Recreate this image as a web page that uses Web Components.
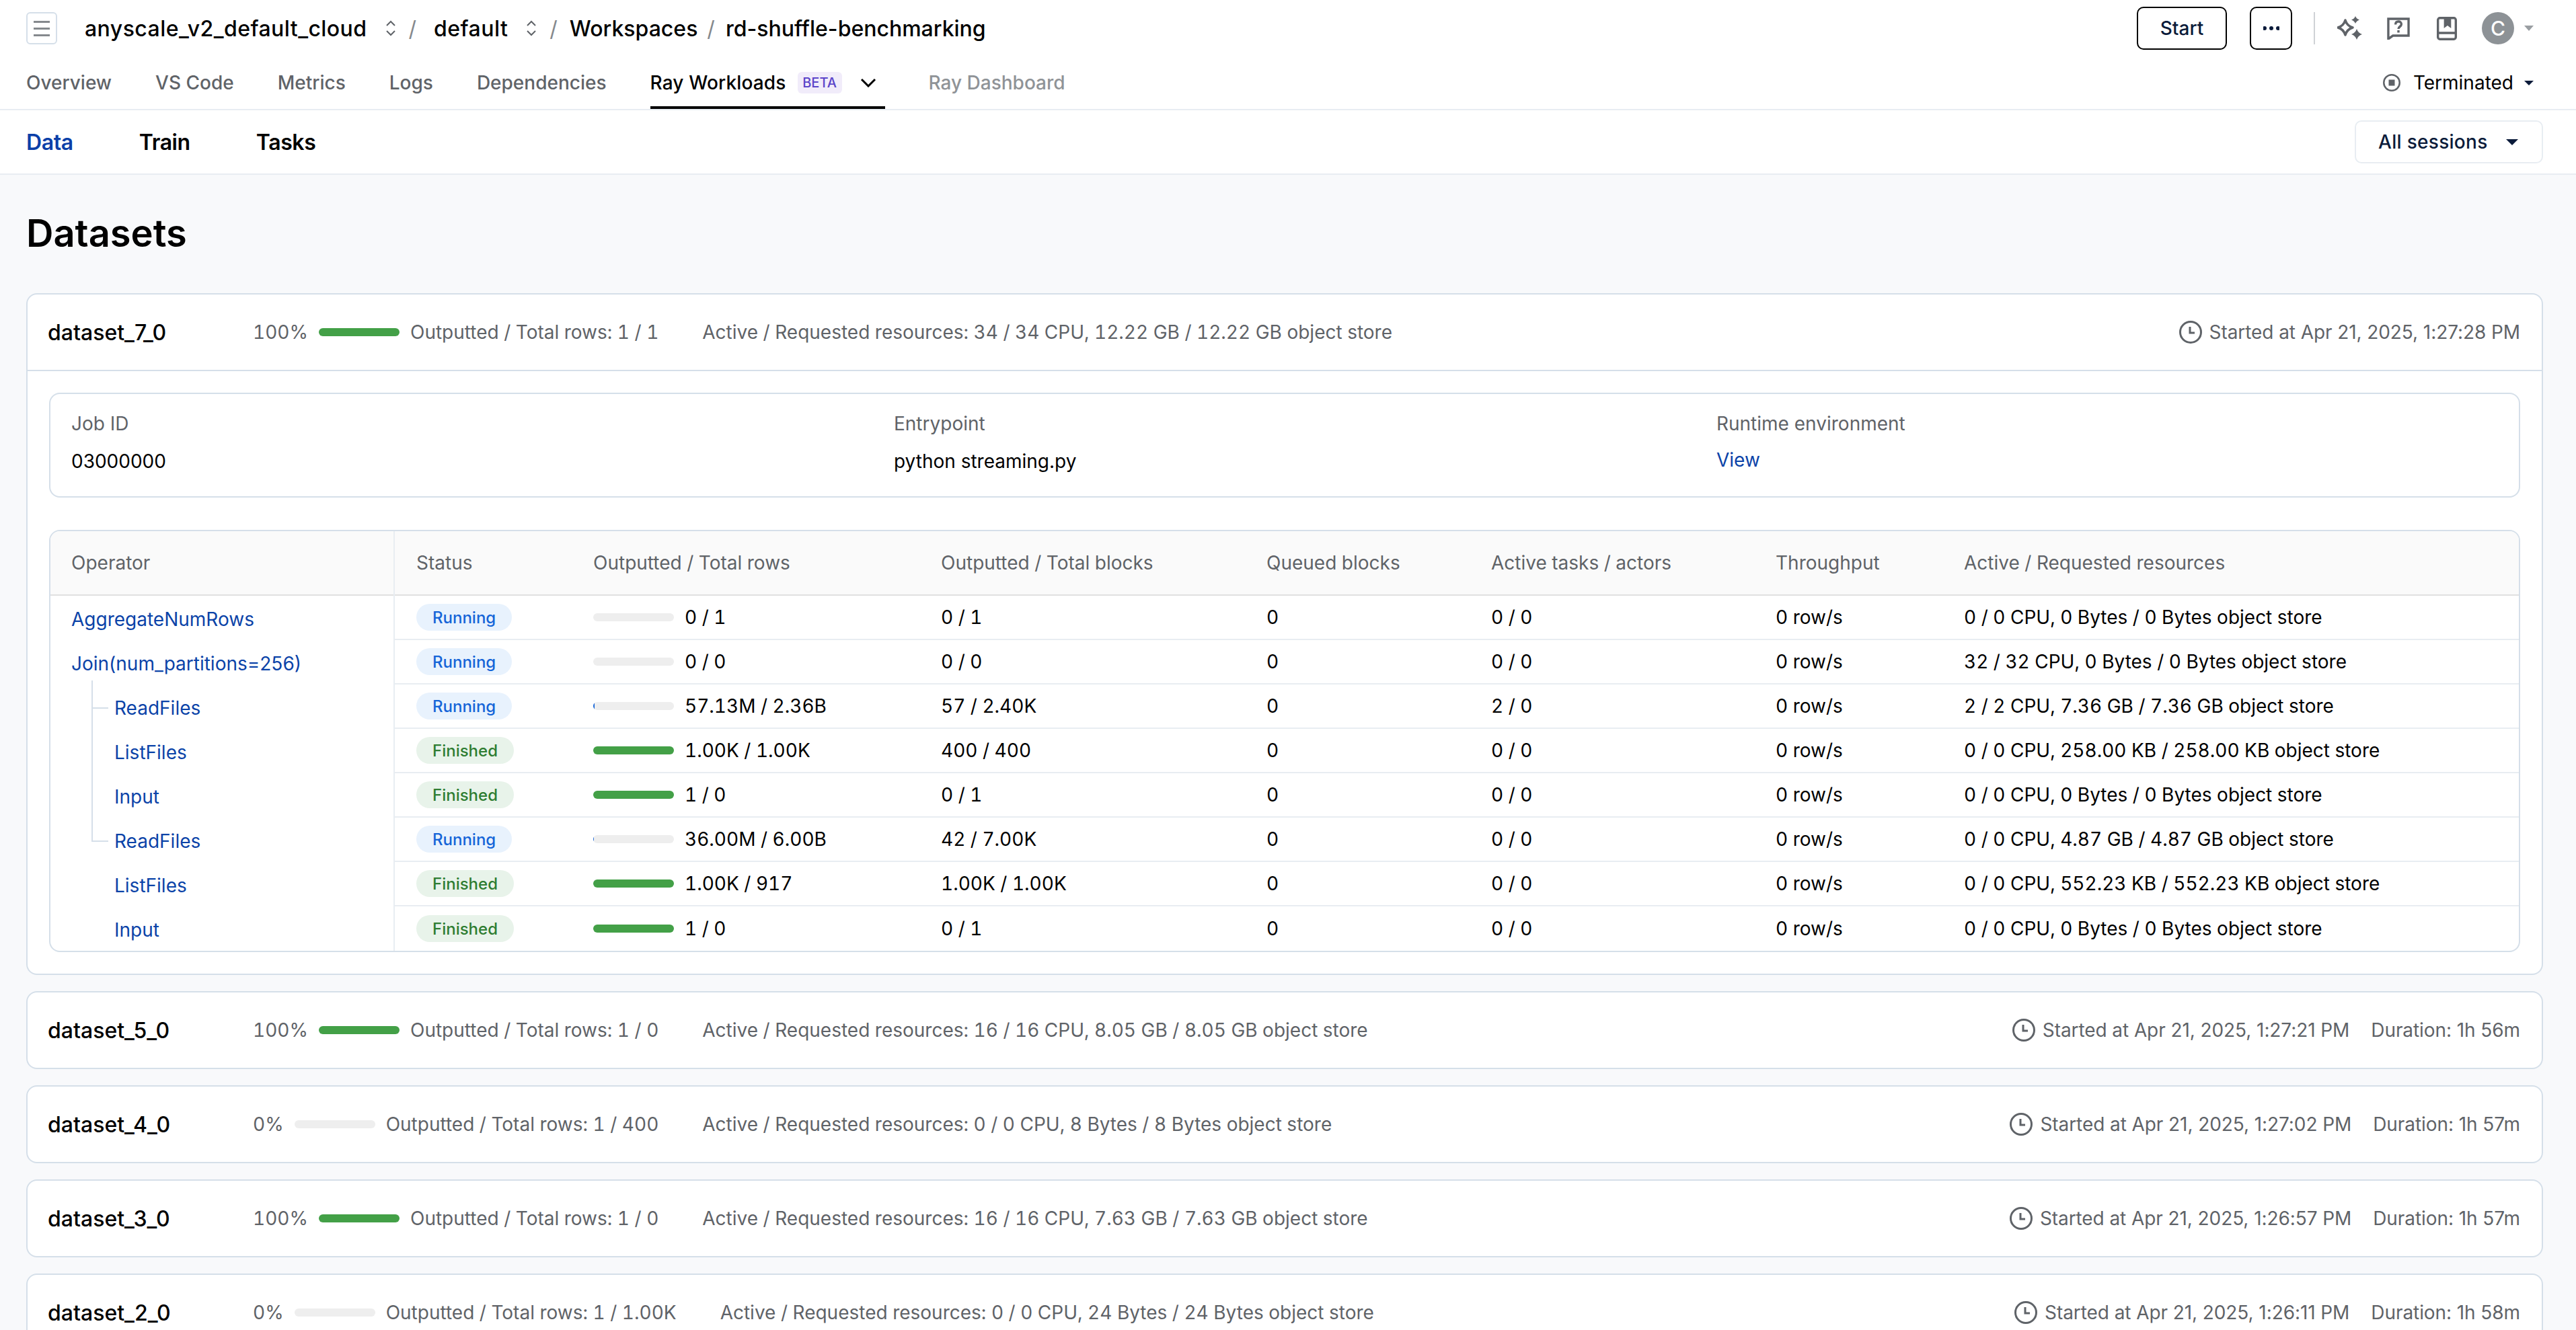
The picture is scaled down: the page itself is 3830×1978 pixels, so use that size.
<!doctype html>
<html>
<head>
<meta charset="utf-8">
<title>Datasets</title>
<style>
  html, body { margin: 0; height: 100%; overflow: hidden; background: #f8f9fb; }
  body { font-family: Inter, "Liberation Sans", sans-serif; font-size: 28px; color: #000; }
</style>
</head>
<body>
<app-header></app-header>
<sub-nav></sub-nav>
<datasets-page>
  <dataset-card name="dataset_7_0" pct="100" rows="1 / 1" res="34 / 34 CPU, 12.22 GB / 12.22 GB object store" started="Apr 21, 2025, 1:27:28 PM">
    <job-info></job-info>
    <operator-table></operator-table>
  </dataset-card>
  <dataset-card name="dataset_5_0" pct="100" rows="1 / 0" res="16 / 16 CPU, 8.05 GB / 8.05 GB object store" started="Apr 21, 2025, 1:27:21 PM" duration="1h 56m"></dataset-card>
  <dataset-card name="dataset_4_0" pct="0" rows="1 / 400" res="0 / 0 CPU, 8 Bytes / 8 Bytes object store" started="Apr 21, 2025, 1:27:02 PM" duration="1h 57m"></dataset-card>
  <dataset-card name="dataset_3_0" pct="100" rows="1 / 0" res="16 / 16 CPU, 7.63 GB / 7.63 GB object store" started="Apr 21, 2025, 1:26:57 PM" duration="1h 57m"></dataset-card>
  <dataset-card name="dataset_2_0" pct="0" rows="1 / 1.00K" res="0 / 0 CPU, 24 Bytes / 24 Bytes object store" started="Apr 21, 2025, 1:26:11 PM" duration="1h 58m"></dataset-card>
</datasets-page>

<script>
// Shared icons
const upDown = `<svg width="18" height="24" viewBox="0 0 18 24" fill="none" stroke="#5f6368" stroke-width="2"><path d="M3 8l6-6 6 6M3 16l6 6 6-6"/></svg>`

// Top bar and tabs
const headerTemplate = document.createElement("template")
headerTemplate.innerHTML = `
  <style>
    :host { display: block; background: #fff; border-bottom: 2px solid #e8edf2; height: 162px; position: relative; }
    .top { display: flex; align-items: center; height: 84px; padding: 0 63px 0 39px; }
    .menu { width: 46px; height: 48px; box-sizing: border-box; border: 2px solid #d5dfe9; border-radius: 6px; display: flex; flex-direction: column; justify-content: center; gap: 7px; align-items: center; margin-right: 41px; }
    .menu i { display: block; width: 24px; height: 3px; background: #85898d; }
    .crumb { font-size: 32px; font-weight: 500; display: flex; align-items: center; }
    .crumb svg { margin-left: 26px; }
    .sel { letter-spacing: .45px; }
    .sep { color: #85898d; font-weight: 400; }
    .actions { margin-left: auto; display: flex; align-items: center; }
    .btn { box-sizing: border-box; height: 64px; border: 2.5px solid #000; border-radius: 10px; background: #fff; display: flex; align-items: center; justify-content: center; color: #0b1b3a; font-weight: 500; }
    .start { width: 134px; }
    .more { width: 63px; margin-left: 34px; }
    .div { width: 2px; height: 48px; background: #cfd2d6; margin: 0 33px 0 32px; }
    .actions svg.ic { display: block; }
    .avatar { width: 48px; height: 48px; border-radius: 50%; background: #8d9296; color: #fff; display: flex; align-items: center; justify-content: center; font-size: 30px; font-weight: 500; margin-left: 37px; }
    .tabs { display: flex; align-items: center; height: 78px; padding: 0 63px 0 39px; position: relative; }
    .tab { color: #5f6368; font-size: 28px; font-weight: 500; margin-right: 65px; line-height: 78px; height: 78px; }
    .tab.active { color: #000; display: flex; align-items: center; position: relative; }
    .tab.active b { font-weight: 500; letter-spacing: .15px; }
    .tab.active::after { content: ""; position: absolute; left: 0; right: 0; bottom: 0; height: 4px; background: #000; }
    .tab.off { color: #8f9397; }
    .beta { font-size: 20px; font-weight: 500; line-height: 32px; height: 32px; width: 66px; text-align: center; background: #f1ecfa; color: #5b45c9; border-radius: 6px; margin: 0 27px 0 17px; }
    .status { margin-left: auto; display: flex; align-items: center; font-size: 28px; }
    .status span { margin: 0 16px 0 19px; }
  </style>
  <div class="top">
    <div class="menu"><i></i><i></i><i></i></div>
    <div class="crumb">
      <span class="sel">anyscale_v2_default_cloud</span>${upDown}<span class="sep" style="margin:0 26px 0 18px">/</span>
      <span class="sel">default</span>${upDown}<span class="sep" style="margin:0 18px 0 18px">/</span>
      <span>Workspaces</span><span class="sep" style="margin:0 16px 0 14px">/</span>
      <span>rd-shuffle-benchmarking</span>
    </div>
    <div class="actions">
      <div class="btn start">Start</div>
      <div class="btn more"><svg width="24" height="8" viewBox="0 0 24 8" fill="#0b1b3a"><circle cx="2" cy="4" r="3"/><circle cx="12" cy="4" r="3"/><circle cx="22" cy="4" r="3"/></svg></div>
      <div class="div"></div>
      <svg class="ic" width="38" height="36" viewBox="0 0 38 36" fill="#5f6368" style="margin-right:36px"><path d="M12 6Q14.500 14.500 23 17Q14.500 19.500 12 28Q9.500 19.500 1 17Q9.500 14.500 12 6Z" fill="none" stroke="#5f6368" stroke-width="3.500" stroke-linejoin="round"/><path d="M27 0Q28.500 4 33 5.500Q28.500 7 27 11Q25.500 7 21 5.500Q25.500 4 27 0Z"/><path d="M29 19Q31 25 37 27Q31 29 29 35Q27 29 21 27Q27 25 29 19Z"/></svg>
      <svg class="ic" width="34" height="34" viewBox="0 0 35 34" preserveAspectRatio="none" fill="none" stroke="#5f6368" stroke-width="3.500" style="margin-right:40px"><path d="M2 3h31v25H9l-7 5z"/><path d="M13 11.500c0-3 2-4.500 4.500-4.500s4.500 1.500 4.500 4c0 3.500-4.500 3.500-4.500 7"/><path d="M17.500 20v3.500"/></svg>
      <svg class="ic" width="30" height="35" viewBox="0 0 31 35" preserveAspectRatio="none" fill="none" stroke="#5f6368" stroke-width="3.500"><rect x="1.750" y="1.750" width="27.500" height="31.500" rx="3"/><path d="M2 24h27"/><path d="M11 2h11v15l-5.500-4-5.500 4z" fill="#5f6368" stroke="none"/></svg>
      <div class="avatar">C</div>
      <svg width="14" height="8" viewBox="0 0 14 8" fill="#9a9ea2" style="margin-left:15px"><path d="M0 0h14L7 8z"/></svg>
    </div>
  </div>
  <div class="tabs">
    <div class="tab">Overview</div>
    <div class="tab">VS Code</div>
    <div class="tab">Metrics</div>
    <div class="tab">Logs</div>
    <div class="tab">Dependencies</div>
    <div class="tab active"><b>Ray Workloads</b><span class="beta">BETA</span><svg width="24" height="14" viewBox="0 0 24 14" fill="none" stroke="#000" stroke-width="3"><path d="M2 2l10 10 10-10"/></svg><span style="width:13px"></span></div>
    <div class="tab off">Ray Dashboard</div>
    <div class="status">
      <svg width="26" height="26" viewBox="0 0 26 26" fill="none" stroke="#5f6368" stroke-width="2.500"><circle cx="13" cy="13" r="11.750"/><rect x="8.500" y="8.500" width="9" height="9" fill="#5f6368" stroke="none"/></svg>
      <span>Terminated</span>
      <svg width="14" height="7" viewBox="0 0 14 7" fill="#0b1b3a"><path d="M0 0h14L7 7z"/></svg>
    </div>
  </div>
`
class AppHeader extends HTMLElement {
    constructor() {
        super()
        this.attachShadow({ mode: "open" }).appendChild(headerTemplate.content.cloneNode(true))
    }
}
customElements.define("app-header", AppHeader)

// Data / Train / Tasks bar
const subNavTemplate = document.createElement("template")
subNavTemplate.innerHTML = `
  <style>
    :host { display: flex; align-items: center; height: 94px; background: #fff; border-bottom: 2px solid #e8edf2; padding: 0 49px 0 39px; }
    a { font-size: 32px; font-weight: 600; letter-spacing: -.4px; margin-right: 98px; color: #000; }
    a.on { color: #0b3fa8; }
    .select { margin-left: auto; box-sizing: border-box; width: 280px; height: 64px; border: 2px solid #e8edf2; border-radius: 10px; display: flex; align-items: center; justify-content: space-between; padding: 0 35px 0 33px; color: #0b1b3a; font-weight: 500; font-size: 28px; letter-spacing: .3px; }
  </style>
  <a class="on">Data</a><a>Train</a><a>Tasks</a>
  <div class="select"><span>All sessions</span><svg width="18" height="9" viewBox="0 0 18 9" fill="#0b1b3a"><path d="M0 0h18L9 9z"/></svg></div>
`
class SubNav extends HTMLElement {
    constructor() {
        super()
        this.attachShadow({ mode: "open" }).appendChild(subNavTemplate.content.cloneNode(true))
    }
}
customElements.define("sub-nav", SubNav)

// Page wrapper
class DatasetsPage extends HTMLElement {
    constructor() {
        super()
        this.attachShadow({ mode: "open" }).innerHTML = `
          <style>
            :host { display: block; padding: 0 49px 0 39px; }
            h1 { font-size: 56px; font-weight: 600; line-height: 64px; margin: 0; padding: 55px 0 57px; }
            .list { display: flex; flex-direction: column; gap: 24px; }
          </style>
          <h1>Datasets</h1>
          <div class="list"><slot></slot></div>
        `
    }
}
customElements.define("datasets-page", DatasetsPage)

// Progress bar
class ProgressBar extends HTMLElement {
    static get observedAttributes() {
        return ["value", "color"]
    }
    constructor() {
        super()
        this.attachShadow({ mode: "open" }).innerHTML = `
          <style>
            :host { display: block; width: 120px; height: 12px; background: #eee; border-radius: 6px; overflow: hidden; flex: none; }
            div { height: 100%; width: 0; background: #43a047; }
          </style>
          <div></div>
        `
    }
    attributeChangedCallback(name, before, value) {
        const bar = this.shadowRoot.querySelector("div")
        if (name === "value") bar.style.width = value + "%"
        if (name === "color") bar.style.background = value
    }
}
customElements.define("progress-bar", ProgressBar)

// Status pill
class StatusBadge extends HTMLElement {
    constructor() {
        super()
        this.attachShadow({ mode: "open" }).innerHTML = `
          <style>
            :host { display: inline-flex; align-items: center; height: 40px; padding: 0 24px; border-radius: 20px; font-size: 24px; font-weight: 500; background: #e8f2fd; color: #1565d8; }
            :host([kind="Finished"]) { background: #e8f3ea; color: #2e7d32; }
          </style>
          <slot></slot>
        `
    }
}
customElements.define("status-badge", StatusBadge)

// One dataset, header row plus optional details
const cardTemplate = document.createElement("template")
cardTemplate.innerHTML = `
  <style>
    :host { display: block; background: #fff; border: 2px solid #d5dfe9; border-radius: 16px; }
    .head { display: flex; align-items: center; height: 112px; padding: 0 32px 0 30px; color: #5f6368; white-space: nowrap; }
    .name { width: 305px; font-size: 32px; font-weight: 500; color: #000; flex: none; }
    .pct, .rows, .res { font-variant-numeric: tabular-nums; }
    progress-bar { margin: 0 16px; }
    .res { margin-left: 65px; }
    .time { margin-left: auto; display: flex; align-items: center; letter-spacing: -.08px; }
    .time svg { margin-right: 11px; }
    .dur:not(:empty) { margin-left: 32px; }
    .body { padding: 32px; display: none; flex-direction: column; gap: 48px; border-top: 2px solid #d5dfe9; }
    :host(.open) .body { display: flex; }
  </style>
  <div class="head">
    <div class="name"></div>
    <span class="pct"></span>
    <progress-bar></progress-bar>
    <span class="rows"></span>
    <span class="res"></span>
    <div class="time">
      <svg width="34" height="34" viewBox="0 0 34 34" fill="none" stroke="#5f6368" stroke-width="3"><circle cx="17" cy="17" r="15.500"/><path d="M16 9v9h7"/></svg>
      <span class="started"></span><span class="dur"></span>
    </div>
  </div>
  <div class="body"><slot></slot></div>
`
class DatasetCard extends HTMLElement {
    constructor() {
        super()
        this.attachShadow({ mode: "open" }).appendChild(cardTemplate.content.cloneNode(true))
    }
    connectedCallback() {
        const root = this.shadowRoot
        root.querySelector(".name").textContent = this.getAttribute("name")
        root.querySelector(".pct").textContent = this.getAttribute("pct") + "%"
        root.querySelector("progress-bar").setAttribute("value", this.getAttribute("pct"))
        root.querySelector(".rows").textContent = "Outputted / Total rows: " + this.getAttribute("rows")
        root.querySelector(".res").textContent = "Active / Requested resources: " + this.getAttribute("res")
        root.querySelector(".started").textContent = "Started at " + this.getAttribute("started")
        if (this.hasAttribute("duration")) {
            root.querySelector(".dur").textContent = "Duration: " + this.getAttribute("duration")
        }
        if (this.children.length) this.classList.add("open")
    }
}
customElements.define("dataset-card", DatasetCard)

// Job id / entrypoint panel
class JobInfo extends HTMLElement {
    constructor() {
        super()
        this.attachShadow({ mode: "open" }).innerHTML = `
          <style>
            :host { display: grid; grid-template-columns: repeat(3, 1223px); box-sizing: border-box; height: 156px; padding: 24px 32px 32px 31px; border: 2px solid #d5dfe9; border-radius: 16px; }
            .k { color: #5f6368; line-height: 40px; margin-bottom: 16px; }
            .v { line-height: 40px; }
            a { color: #0b43a8; }
          </style>
          <div><div class="k">Job ID</div><div class="v">03000000</div></div>
          <div><div class="k">Entrypoint</div><div class="v">python streaming.py</div></div>
          <div><div class="k">Runtime environment</div><div class="v" style="margin-top:-2px"><a>View</a></div></div>
        `
    }
}
customElements.define("job-info", JobInfo)

// Operators table
const OPERATORS = [
    ["AggregateNumRows", 0, "Running", 0, "0 / 1", "0 / 1", "0", "0 / 0", "0 row/s", "0 / 0 CPU, 0 Bytes / 0 Bytes object store"],
    ["Join(num_partitions=256)", 0, "Running", 0, "0 / 0", "0 / 0", "0", "0 / 0", "0 row/s", "32 / 32 CPU, 0 Bytes / 0 Bytes object store"],
    ["ReadFiles", 1, "Running", 1.7, "57.13M / 2.36B", "57 / 2.40K", "0", "2 / 0", "0 row/s", "2 / 2 CPU, 7.36 GB / 7.36 GB object store"],
    ["ListFiles", 1, "Finished", 100, "1.00K / 1.00K", "400 / 400", "0", "0 / 0", "0 row/s", "0 / 0 CPU, 258.00 KB / 258.00 KB object store"],
    ["Input", 1, "Finished", 100, "1 / 0", "0 / 1", "0", "0 / 0", "0 row/s", "0 / 0 CPU, 0 Bytes / 0 Bytes object store"],
    ["ReadFiles", 1, "Running", 1.2, "36.00M / 6.00B", "42 / 7.00K", "0", "0 / 0", "0 row/s", "0 / 0 CPU, 4.87 GB / 4.87 GB object store"],
    ["ListFiles", 1, "Finished", 100, "1.00K / 917", "1.00K / 1.00K", "0", "0 / 0", "0 row/s", "0 / 0 CPU, 552.23 KB / 552.23 KB object store"],
    ["Input", 1, "Finished", 100, "1 / 0", "0 / 1", "0", "0 / 0", "0 row/s", "0 / 0 CPU, 0 Bytes / 0 Bytes object store"],
]
const tableTemplate = document.createElement("template")
tableTemplate.innerHTML = `
  <style>
    :host { display: flex; border: 2px solid #d5dfe9; border-radius: 16px; overflow: hidden; }
    .left { width: 510px; flex: none; border-right: 2px solid #e8edf2; position: relative; }
    .right { flex: 1; min-width: 0; font-variant-numeric: tabular-nums; }
    .hd { height: 94px; background: #fafafa; border-bottom: 2px solid #e0e0e0; color: #5f6368; display: flex; align-items: center; }
    .left .hd { padding-left: 31px; }
    .op { height: 66px; box-sizing: border-box; padding: 11px 0 0 31px; line-height: 48px; color: #0b43a8; }
    .op.child { padding-left: 95px; }
    .line { position: absolute; background: #d5dfe9; }
    .grid { display: grid; grid-template-columns: 263px 517px 484px 334px 423px 280px 1fr; padding-left: 32px; align-items: center; }
    .row { height: 66px; box-sizing: border-box; border-bottom: 2px solid #e8edf2; }
    .row:last-child { border-bottom: 0; }
    .cell-rows { display: flex; align-items: center; gap: 16px; }
    .hd.grid { display: grid; }
  </style>
  <div class="left">
    <div class="hd">Operator</div>
    <div class="ops"></div>
    <i class="line" style="left:61px;top:222px;width:2px;height:240px"></i>
    <i class="line" style="left:61px;top:262px;width:25px;height:2px"></i>
    <i class="line" style="left:61px;top:460px;width:25px;height:2px"></i>
  </div>
  <div class="right">
    <div class="hd grid"><span>Status</span><span>Outputted / Total rows</span><span>Outputted / Total blocks</span><span>Queued blocks</span><span>Active tasks / actors</span><span>Throughput</span><span>Active / Requested resources</span></div>
    <div class="rows"></div>
  </div>
`
class OperatorTable extends HTMLElement {
    constructor() {
        super()
        this.attachShadow({ mode: "open" }).appendChild(tableTemplate.content.cloneNode(true))
    }
    connectedCallback() {
        const root = this.shadowRoot
        root.querySelector(".ops").innerHTML = OPERATORS.map(o =>
            `<div class="op ${o[1] ? "child" : ""}">${o[0]}</div>`).join("")
        root.querySelector(".rows").innerHTML = OPERATORS.map(o => `
          <div class="row grid">
            <div><status-badge kind="${o[2]}">${o[2]}</status-badge></div>
            <div class="cell-rows"><progress-bar value="${o[3]}" color="${o[3] < 100 ? "#1565d8" : "#43a047"}"></progress-bar><span>${o[4]}</span></div>
            <div>${o[5]}</div><div>${o[6]}</div><div>${o[7]}</div><div>${o[8]}</div><div>${o[9]}</div>
          </div>`).join("")
    }
}
customElements.define("operator-table", OperatorTable)
</script>
</body>
</html>
